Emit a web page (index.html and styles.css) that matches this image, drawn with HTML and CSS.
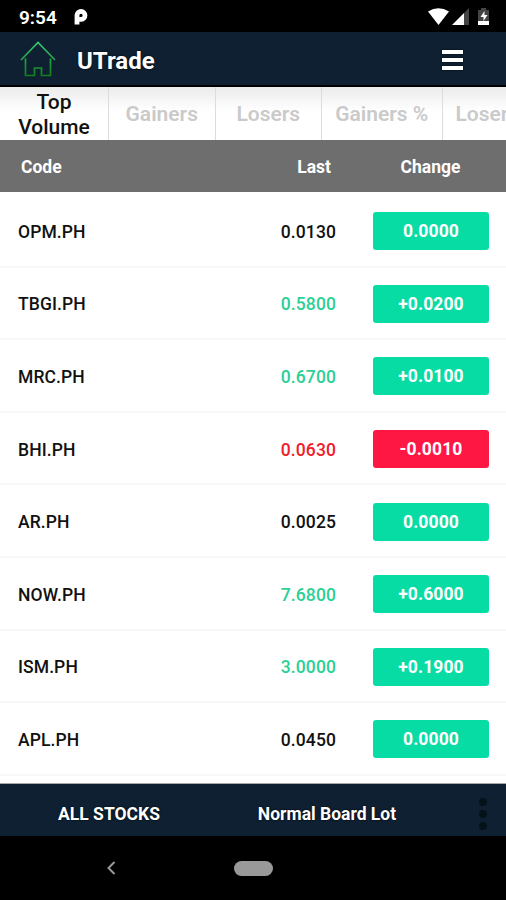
FILE: index.html
```html
<!DOCTYPE html>
<html lang="en">

<head>
    <meta charset="UTF-8">
    <meta name="viewport" content="width=device-width, initial-scale=1.0">
    <title>UTrade</title>
    <link rel="stylesheet" href="styles.css">
</head>

<body>
    <!-- phone status bar -->
    <div class="status-bar">
        <span class="clock">9:54</span>
        <svg class="p-icon" width="14" height="18" viewBox="0 0 14 18">
            <path d="M3 16.500V7.200a4 4 0 1 1 4.200 4.200H5" fill="none" stroke="#fff" stroke-width="4.800" />
        </svg>
        <svg class="status-icons" width="64" height="20" viewBox="0 0 64 20">
            <path d="M1 4.500Q11.500-2 22 4.500L11.500 18z" fill="#fff" />
            <path d="M25 18L37 6v12z" fill="#fff" />
            <path d="M37 6l5-5v17h-5z" fill="#444" />
            <path d="M51 3h3V1h5v2h3v12H51z" fill="#444" />
            <path d="M51 14h11v4H51z" fill="#fff" />
            <path d="M57.500 4l-4 6h3v4l4-6h-3z" fill="#fff" />
        </svg>
    </div>

    <!-- app header -->
    <header class="header">
        <svg class="home-icon" width="36" height="38" viewBox="0 0 36 38">
            <defs>
                <linearGradient id="homeGreen" x1="0" y1="0" x2="0" y2="1">
                    <stop offset="0" stop-color="#35c873" />
                    <stop offset="1" stop-color="#10801c" />
                </linearGradient>
            </defs>
            <path d="M1 20L18 2.500L35 20M5.500 18.500V35.500H14.500V28H21.500V35.500H30.500V18.500" fill="none"
                stroke="url(#homeGreen)" stroke-width="1.700" />
        </svg>
        <h1 class="title">UTrade</h1>
        <div class="menu">
            <span></span>
            <span></span>
            <span></span>
        </div>
    </header>

    <nav class="tabs">
        <div class="tab active">Top Volume</div>
        <div class="tab">Gainers</div>
        <div class="tab">Losers</div>
        <div class="tab tab-wide">Gainers %</div>
        <div class="tab tab-last">Losers %</div>
    </nav>

    <div class="list-head">
        <span class="head-code">Code</span>
        <span class="head-last">Last</span>
        <span class="head-change">Change</span>
    </div>

    <!-- stock list -->
    <main class="list">
        <div class="row">
            <span class="code">OPM.PH</span>
            <span class="last">0.0130</span>
            <span class="change">0.0000</span>
        </div>
        <div class="row">
            <span class="code">TBGI.PH</span>
            <span class="last up">0.5800</span>
            <span class="change">+0.0200</span>
        </div>
        <div class="row">
            <span class="code">MRC.PH</span>
            <span class="last up">0.6700</span>
            <span class="change">+0.0100</span>
        </div>
        <div class="row">
            <span class="code">BHI.PH</span>
            <span class="last down">0.0630</span>
            <span class="change change-down">-0.0010</span>
        </div>
        <div class="row">
            <span class="code">AR.PH</span>
            <span class="last">0.0025</span>
            <span class="change">0.0000</span>
        </div>
        <div class="row">
            <span class="code">NOW.PH</span>
            <span class="last up">7.6800</span>
            <span class="change">+0.6000</span>
        </div>
        <div class="row">
            <span class="code">ISM.PH</span>
            <span class="last up">3.0000</span>
            <span class="change">+0.1900</span>
        </div>
        <div class="row">
            <span class="code">APL.PH</span>
            <span class="last">0.0450</span>
            <span class="change">0.0000</span>
        </div>
    </main>

    <footer class="footer">
        <span class="filter">ALL STOCKS</span>
        <span class="filter">Normal Board Lot</span>
        <svg class="more" width="10" height="34" viewBox="0 0 10 34">
            <circle cx="5" cy="5" r="4" />
            <circle cx="5" cy="17" r="4" />
            <circle cx="5" cy="29" r="4" />
        </svg>
    </footer>

    <!-- phone navigation -->
    <div class="phone-nav">
        <svg class="back" width="10" height="16" viewBox="0 0 10 16">
            <path d="M8.500 2L2.500 8l6 6" fill="none" stroke="#999" stroke-width="2" />
        </svg>
        <div class="home-pill"></div>
    </div>
</body>

</html>
```

FILE: styles.css
```css
* {
    box-sizing: border-box;
}

body {
    margin: 0;
    width: 506px;
    height: 900px;
    display: flex;
    flex-direction: column;
    overflow: hidden;
    background-color: #fff;
    color: #111;
    font-family: Roboto, sans-serif;
    font-weight: 500;
}

/* status bar */
.status-bar {
    flex: none;
    height: 32px;
    padding: 2px 15px 0 19px;
    display: flex;
    align-items: center;
    background-color: #000;
    color: #fff;
}

.clock {
    width: 55px;
    padding-top: 1px;
    font-size: 19px;
    font-weight: 600;
}

.status-icons {
    margin-left: auto;
}

/* header */
.header {
    flex: none;
    height: 55px;
    padding: 0 43px 0 20px;
    display: flex;
    align-items: center;
    background-color: #0e2031;
    border-bottom: 2px solid #000;
    color: #fff;
}

.title {
    margin: 5px 0 0 21px;
    font-size: 24px;
    font-weight: 700;
    text-shadow: 0 0 2px #000;
}

.menu {
    margin-left: auto;
    margin-top: 2px;
    width: 21px;
    display: flex;
    flex-direction: column;
    gap: 4px;
}

.menu span {
    height: 4px;
    background-color: #fff;
    box-shadow: 0 0 2px #000;
}

/* tabs */
.tabs {
    flex: none;
    height: 53px;
    display: flex;
    background: linear-gradient(#ebebeb, #fff 24px);
    overflow: hidden;
}

.tab {
    flex: none;
    width: 106.5px;
    padding-top: 2px;
    display: flex;
    align-items: center;
    justify-content: center;
    text-align: center;
    border-right: 1px solid #dcdcdc;
    color: #cacaca;
    font-size: 21px;
    font-weight: 600;
    line-height: 25px;
}

.tab.active {
    width: 109px;
    padding: 3px 10px 0;
    color: #111;
    font-weight: 500;
}

.tab-wide {
    width: 120.5px;
}

.tab-last {
    width: 121px;
    padding-left: 13px;
    justify-content: flex-start;
}

/* list header */
.list-head {
    flex: none;
    height: 52px;
    padding: 2px 17px 0 21px;
    display: flex;
    align-items: center;
    background-color: #6e6e6e;
    color: #fff;
    font-size: 17.5px;
    font-weight: 700;
}

.head-code {
    flex: 1;
}

.head-last {
    margin-right: 41px;
}

.head-change {
    width: 117px;
    text-align: center;
}

/* rows */
.list {
    flex: 1;
    min-height: 0;
    padding-top: 3px;
    overflow: hidden;
    border-bottom: 1px solid #aaa;
}

.row {
    height: 72.6px;
    padding: 2px 17px 0 18px;
    display: flex;
    align-items: center;
    border-bottom: 2px solid #f7f7f7;
    font-size: 17.5px;
    letter-spacing: 0.1px;
}

.code {
    flex: 1;
    padding-top: 1px;
}

.last {
    margin-right: 37px;
    padding-top: 1px;
}

.up {
    color: #2bd096;
}

.down {
    color: #ee2029;
}

.change {
    width: 116px;
    height: 38px;
    border-radius: 3px;
    background-color: #08dca5;
    color: #fff;
    font-weight: 700;
    line-height: 39px;
    text-align: center;
}

.change-down {
    background-color: #ff1744;
}

/* footer */
.footer {
    flex: none;
    height: 52px;
    padding: 8px 18px 0 0;
    display: flex;
    align-items: center;
    background-color: #0e2031;
    color: #fff;
    font-size: 17.5px;
    font-weight: 700;
    text-shadow: 0 0 2px #000;
}

.filter {
    width: 218px;
    text-align: center;
}

.more {
    margin-left: auto;
    fill: #04121b;
}

/* bottom phone bar */
.phone-nav {
    flex: none;
    height: 64px;
    padding-left: 106px;
    display: flex;
    align-items: center;
    background-color: #000;
}

.home-pill {
    margin-left: 118px;
    width: 39px;
    height: 15px;
    border-radius: 8px;
    background-color: #999;
}
```
